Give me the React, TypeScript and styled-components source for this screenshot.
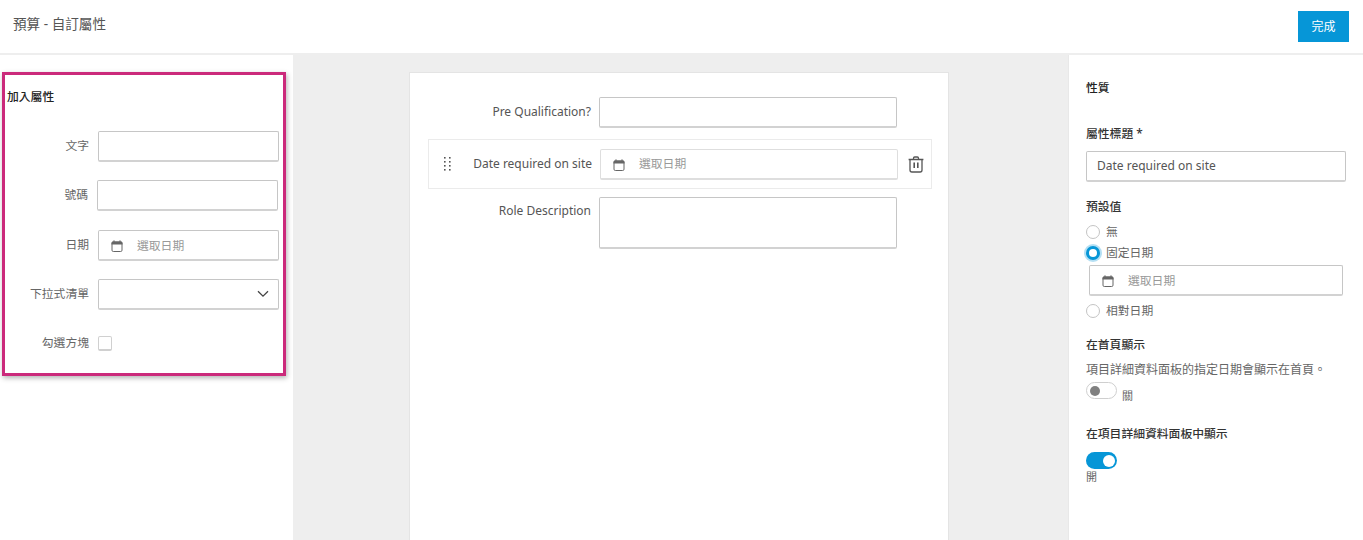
import React from "react";
import styled, { createGlobalStyle } from "styled-components";

const Global = createGlobalStyle`
  html, body { margin: 0; padding: 0; height: 540px; overflow: hidden; background: #fff; }
  body { font-family: "Noto Sans", "Noto Sans CJK TC", sans-serif; color: #555; }
  * { box-sizing: border-box; }
`;

const Page = styled.div`
  width: 1363px;
  height: 540px;
  display: flex;
  flex-direction: column;
  overflow: hidden;
`;
const Header = styled.header`
  height: 55px;
  flex: none;
  display: flex;
  align-items: flex-start;
  justify-content: space-between;
  padding: 11px 14px 0 13px;
  border-bottom: 2px solid #eeeeee;
`;
const Title = styled.h1`
  margin: 4px 0 0;
  font-size: 13.6px;
  line-height: 18px;
  font-weight: 400;
  color: #555;
`;
const DoneButton = styled.button`
  width: 51px;
  height: 31px;
  border: 0;
  padding: 0;
  background: #0696d7;
  color: #fff;
  font: 400 12px/31px "Noto Sans", "Noto Sans CJK TC", sans-serif;
`;
const Body = styled.main`
  flex: 1;
  display: flex;
  min-height: 0;
`;
const LeftPanel = styled.aside`
  width: 293px;
  flex: none;
  padding: 17px 0 0 2px;
`;
const HighlightBox = styled.section`
  width: 284px;
  height: 304px;
  border: 3px solid #cb2a7b;
  box-shadow: 1px 2px 5px rgba(0, 0, 0, 0.3);
  padding: 13px 0 0 2px;
  display: flex;
  flex-direction: column;
`;
const PanelHeading = styled.h2`
  margin: 0;
  font-size: 11.8px;
  line-height: 17px;
  font-weight: 500;
  color: #222;
`;
const PaletteList = styled.div`
  margin-top: 26px;
  display: flex;
  flex-direction: column;
`;
const PaletteRow = styled.div<{ $shift?: number; $gap?: number }>`
  display: flex;
  align-items: center;
  height: 31px;
  margin-bottom: ${(p) => p.$gap ?? 18}px;
  margin-left: ${(p) => p.$shift ?? 0}px;
`;
const PaletteLabel = styled.label`
  width: 82px;
  margin-right: 9px;
  padding-bottom: 4px;
  flex: none;
  text-align: right;
  font-size: 11.8px;
  color: #666;
`;
const Input = styled.div<{ $w: number; $h?: number }>`
  width: ${(p) => p.$w}px;
  height: ${(p) => p.$h ?? 31}px;
  flex: none;
  border: 1px solid #c6c6c6;
  border-bottom: 2px solid #d2d2d2;
  border-radius: 2px;
  background: #fff;
  display: flex;
  align-items: center;
  font-size: 12.5px;
  color: #555;
`;
const DateInput = styled(Input)<{ $light?: boolean }>`
  padding-left: 12px;
  gap: 14px;
  font-size: 11.8px;
  color: #999;
  ${(p) => (p.$light ? "border-color:#dedede;" : "")}
`;
const Placeholder = styled.span`
  margin-top: -2px;
`;
const SelectInput = styled(Input)`
  justify-content: flex-end;
  padding-right: 9px;
  color: #444;
`;
const CheckBox = styled.span`
  width: 14px;
  height: 15px;
  border: 1px solid #d0d0d0;
  border-bottom-width: 2px;
  border-radius: 2px;
`;
const Canvas = styled.div`
  flex: 1;
  background: #eeeeee;
  padding: 17px 0 0 116px;
`;
const Card = styled.div`
  width: 540px;
  height: 480px;
  background: #fff;
  border: 1px solid #e4e4e4;
  padding: 24px 0 0 18px;
  display: flex;
  flex-direction: column;
`;
const FormRow = styled.div<{ $top?: boolean }>`
  display: flex;
  align-items: ${(p) => (p.$top ? "flex-start" : "center")};
`;
const FormLabel = styled.label<{ $w?: number; $top?: boolean }>`
  width: ${(p) => p.$w ?? 163}px;
  flex: none;
  margin-right: 8px;
  text-align: right;
  font-size: 12px;
  color: #555;
  ${(p) => (p.$top ? "margin-top:4px;line-height:19px;" : "padding-bottom:2px;")}
`;
const DragRow = styled.div`
  width: 504px;
  height: 50px;
  margin: 11px 0 8px;
  border: 1px solid #ebebeb;
  display: flex;
  align-items: center;
  padding: 0 0 0 14px;
`;
const Handle = styled.svg`
  width: 8px;
  height: 14px;
  flex: none;
  margin-right: 6px;
`;
const TrashButton = styled.span`
  margin-left: 10px;
  display: flex;
`;
const RightPanel = styled.aside`
  width: 295px;
  flex: none;
  border-left: 1px solid #e8e8e8;
  padding: 24px 17px 0 17px;
`;
const PropHeading = styled.h2`
  margin: 0;
  font-size: 11.8px;
  line-height: 17px;
  font-weight: 500;
  color: #222;
`;
const FieldHeading = styled.h3<{ $mt: number; $mb?: number }>`
  margin: ${(p) => p.$mt}px 0 ${(p) => p.$mb ?? 0}px;
  font-size: 11.8px;
  line-height: 17px;
  font-weight: 500;
  color: #333;
`;
const TitleInput = styled(Input)`
  padding: 0 0 1px 10px;
  font-size: 12px;
`;
const RadioRow = styled.div<{ $mt?: number }>`
  display: flex;
  align-items: center;
  gap: 6px;
  height: 15px;
  margin-top: ${(p) => p.$mt ?? 0}px;
  font-size: 11.8px;
  color: #666;
`;
const RadioText = styled.span`
  margin-top: -2px;
`;
const Radio = styled.span<{ $on?: boolean }>`
  width: 14px;
  height: 14px;
  flex: none;
  border-radius: 50%;
  background: #fff;
  ${(p) =>
    p.$on
      ? "border:3.5px solid #0696d7; box-shadow:0 0 0 2px rgba(6,150,215,.3);"
      : "border:1px solid #c4c4c4;"}
`;
const IndentedDate = styled.div`
  margin: 5px 0 7px 3px;
`;
const HelpText = styled.p`
  margin: 8px 0 0;
  font-size: 12px;
  line-height: 17px;
  color: #666;
  white-space: nowrap;
`;
const Track = styled.span<{ $on?: boolean }>`
  width: 31px;
  height: 17px;
  display: flex;
  align-items: center;
  flex: none;
  border-radius: 9px;
  padding: 0 ${(p) => (p.$on ? 2 : 3)}px;
  justify-content: ${(p) => (p.$on ? "flex-end" : "flex-start")};
  background: ${(p) => (p.$on ? "#0696d7" : "#fff")};
  border: ${(p) => (p.$on ? "0" : "1px solid #cfcfcf")};
`;
const Knob = styled.span<{ $on?: boolean }>`
  width: ${(p) => (p.$on ? 12 : 10)}px;
  height: ${(p) => (p.$on ? 12 : 10)}px;
  border-radius: 50%;
  background: ${(p) => (p.$on ? "#fff" : "#808080")};
`;
const ToggleOff = styled.div`
  display: flex;
  gap: 5px;
  margin-top: 4px;
  height: 20px;
  font-size: 11px;
  color: #666;
`;
const ToggleOffText = styled.span`
  margin-top: 5px;
  line-height: 17px;
`;
const ToggleOnText = styled.div`
  font-size: 11px;
  line-height: 15px;
  color: #666;
`;

const Calendar = () => (
  <svg width="12" height="12" viewBox="0 0 12 12" style={{ flex: "none", marginTop: 2 }}>
    <path d="M.5 3C.5 2 1.2 1.4 2 1.4H10C10.8 1.4 11.5 2 11.5 3V4.6H.5Z" fill="#666" />
    <path d="M3 .3V2M9 .3V2" stroke="#666" strokeWidth="1" />
    <rect x="1" y="2" width="10" height="9.5" rx="1.3" fill="none" stroke="#666" strokeWidth="1" />
  </svg>
);
const Chevron = () => (
  <svg width="12" height="8" viewBox="0 0 12 8">
    <path d="M1 1.2L6 6.2L11 1.2" fill="none" stroke="#444" strokeWidth="1.3" />
  </svg>
);
const Trash = () => (
  <svg width="16" height="17" viewBox="0 0 16 17">
    <path
      d="M.6 3.5H15.4M5.5 3.2V2.2C5.5 1.4 6 1 6.7 1H9.3C10 1 10.5 1.4 10.5 2.2V3.2M2 3.5V14C2 15.2 2.8 16 3.9 16H12.1C13.2 16 14 15.2 14 14V3.5"
      fill="none"
      stroke="#555"
      strokeWidth="1.3"
    />
    <path d="M6.2 6.5V12M9.8 6.5V12" stroke="#555" strokeWidth="1.6" />
  </svg>
);
const Dots = () => (
  <Handle viewBox="0 0 8 14">
    {[1, 5, 9, 13].map((y) =>
      [1, 6].map((x) => <rect key={`${x}-${y}`} x={x} y={y - 1} width="1.6" height="1.6" fill="#555" />)
    )}
  </Handle>
);

export default function App() {
  return (
    <Page>
      <Global />
      <Header>
        <Title>預算 - 自訂屬性</Title>
        <DoneButton>完成</DoneButton>
      </Header>
      <Body>
        <LeftPanel>
          <HighlightBox>
            <PanelHeading>加入屬性</PanelHeading>
            <PaletteList>
              <PaletteRow>
                <PaletteLabel>文字</PaletteLabel>
                <Input $w={181} />
              </PaletteRow>
              <PaletteRow $shift={-1} $gap={19}>
                <PaletteLabel>號碼</PaletteLabel>
                <Input $w={181} />
              </PaletteRow>
              <PaletteRow>
                <PaletteLabel>日期</PaletteLabel>
                <DateInput $w={181}>
                  <Calendar />
                  <Placeholder>選取日期</Placeholder>
                </DateInput>
              </PaletteRow>
              <PaletteRow>
                <PaletteLabel>下拉式清單</PaletteLabel>
                <SelectInput $w={181}>
                  <Chevron />
                </SelectInput>
              </PaletteRow>
              <PaletteRow>
                <PaletteLabel>勾選方塊</PaletteLabel>
                <CheckBox />
              </PaletteRow>
            </PaletteList>
          </HighlightBox>
        </LeftPanel>
        <Canvas>
          <Card>
            <FormRow>
              <FormLabel>Pre Qualification?</FormLabel>
              <Input $w={298} $h={31} />
            </FormRow>
            <DragRow>
              <Dots />
              <FormLabel $w={135}>Date required on site</FormLabel>
              <DateInput $w={298} $light>
                <Calendar />
                <Placeholder>選取日期</Placeholder>
              </DateInput>
              <TrashButton>
                <Trash />
              </TrashButton>
            </DragRow>
            <FormRow $top>
              <FormLabel $top>Role Description</FormLabel>
              <Input $w={298} $h={52} />
            </FormRow>
          </Card>
        </Canvas>
        <RightPanel>
          <PropHeading>性質</PropHeading>
          <FieldHeading $mt={29} $mb={9}>屬性標題 *</FieldHeading>
          <TitleInput $w={260}>Date required on site</TitleInput>
          <FieldHeading $mt={16} $mb={9}>預設值</FieldHeading>
          <RadioRow>
            <Radio />
            <RadioText>無</RadioText>
          </RadioRow>
          <RadioRow $mt={6}>
            <Radio $on />
            <RadioText>固定日期</RadioText>
          </RadioRow>
          <IndentedDate>
            <DateInput $w={254}>
              <Calendar />
              <Placeholder>選取日期</Placeholder>
            </DateInput>
          </IndentedDate>
          <RadioRow>
            <Radio />
            <RadioText>相對日期</RadioText>
          </RadioRow>
          <FieldHeading $mt={18}>在首頁顯示</FieldHeading>
          <HelpText>項目詳細資料面板的指定日期會顯示在首頁。</HelpText>
          <ToggleOff>
            <Track>
              <Knob />
            </Track>
            <ToggleOffText>關</ToggleOffText>
          </ToggleOff>
          <FieldHeading $mt={23} $mb={10}>在項目詳細資料面板中顯示</FieldHeading>
          <Track $on>
            <Knob $on />
          </Track>
          <ToggleOnText>開</ToggleOnText>
        </RightPanel>
      </Body>
    </Page>
  );
}
